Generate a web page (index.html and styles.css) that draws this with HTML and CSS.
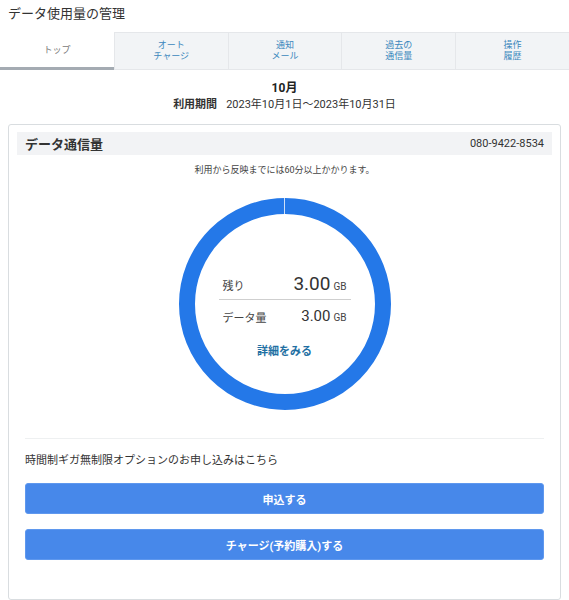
FILE: index.html
```html
<!DOCTYPE html>
<html lang="ja">
<head>
<meta charset="utf-8">
<title>データ使用量の管理</title>
<link rel="stylesheet" href="styles.css">
</head>
<body>
<header class="page-title">データ使用量の管理</header>
<nav class="tabs">
  <div class="tab active">トップ</div>
  <div class="tab">オート<br>チャージ</div>
  <div class="tab">通知<br>メール</div>
  <div class="tab">過去の<br>通信量</div>
  <div class="tab">操作<br>履歴</div>
</nav>
<section class="period">
  <div class="month">10月</div>
  <div class="range"><span class="range-label">利用期間</span>2023年10月1日～2023年10月31日</div>
</section>
<section class="card">
  <div class="card-head">
    <span class="card-title">データ通信量</span>
    <span class="phone">080-9422-8534</span>
  </div>
  <p class="note">利用から反映までには60分以上かかります。</p>
  <div class="donut">
    <div class="donut-inner">
      <div class="row row-main">
        <span class="label">残り</span>
        <span class="value"><span class="num big">3.00</span><span class="unit">GB</span></span>
      </div>
      <div class="divider"></div>
      <div class="row">
        <span class="label">データ量</span>
        <span class="value"><span class="num">3.00</span><span class="unit">GB</span></span>
      </div>
      <a class="detail">詳細をみる</a>
    </div>
  </div>
  <div class="option">
    <p class="option-text">時間制ギガ無制限オプションのお申し込みはこちら</p>
    <button class="btn">申込する</button>
    <button class="btn">チャージ(予約購入)する</button>
  </div>
</section>
</body>
</html>
```
FILE: styles.css
```css
* { box-sizing: border-box; }
html, body { margin: 0; padding: 0; background: #fff; }
body {
  width: 569px;
  font-family: Roboto, "Noto Sans CJK JP", sans-serif;
  color: #333;
}
.page-title {
  height: 32px;
  padding: 5px 0 0 8px;
  font-size: 13px;
  line-height: 18px;
  color: #333;
}
.tabs {
  display: grid;
  grid-template-columns: repeat(5, 1fr);
  height: 38px;
}
.tab {
  display: flex;
  align-items: center;
  justify-content: center;
  text-align: center;
  font-size: 9px;
  line-height: 11px;
  color: #3b88bd;
  background: #f2f4f6;
  border-top: 1px solid #e5e7ea;
  border-bottom: 1px solid #e5e7ea;
  border-left: 1px solid #e5e7ea;
}
.tab.active {
  background: #fff;
  color: #7a7a7a;
  border: none;
  border-bottom: 3px solid #a4abb2;
  padding-top: 2px;
}
.period {
  padding-top: 9px;
  text-align: center;
}
.month {
  font-size: 12px;
  font-weight: 700;
  line-height: 18px;
  color: #222;
}
.range {
  font-size: 11px;
  line-height: 16px;
  color: #333;
}
.range-label {
  font-weight: 700;
  margin-right: 9px;
}
.card {
  margin: 11px 8px 0;
  height: 476px;
  border: 1px solid #d9dde0;
  border-radius: 3px;
  padding: 7px 8px 0;
}
.card-head {
  display: flex;
  justify-content: space-between;
  align-items: center;
  height: 23px;
  padding: 0 8px;
  background: #f2f3f5;
}
.card-title {
  font-size: 13px;
  font-weight: 700;
  color: #333;
}
.phone {
  font-size: 11px;
  color: #333;
}
.note {
  margin: 9px 0 0;
  font-size: 9px;
  line-height: 12px;
  text-align: center;
  color: #444;
}
.donut {
  position: relative;
  width: 212px;
  height: 212px;
  margin: 22px auto 0;
  border: 16px solid #2478e8;
  border-radius: 50%;
}
.donut::before {
  content: "";
  position: absolute;
  top: -16px;
  left: 89px;
  width: 1px;
  height: 16px;
  background: #cfe0f8;
}
.donut-inner {
  display: flex;
  flex-direction: column;
  align-items: center;
  padding-top: 57px;
}
.row {
  display: flex;
  justify-content: space-between;
  align-items: baseline;
  width: 132px;
  height: 24px;
  padding: 0 4px;
}
.label {
  font-size: 11px;
  color: #444;
}
.value {
  display: flex;
  align-items: baseline;
}
.num {
  font-size: 15px;
  color: #333;
}
.num.big {
  font-size: 19px;
}
.unit {
  margin-left: 3px;
  font-size: 10px;
  color: #444;
}
.row-main { align-items: center; }
.row-main .label { padding-top: 4px; }
.divider {
  width: 132px;
  height: 1px;
  margin: 4px 0 4px;
  background: #cfcfcf;
}
.row + .row, .divider + .row { align-items: center; }
.divider + .row .label { padding-top: 1px; }
.detail {
  margin-top: 16px;
  font-size: 11px;
  line-height: 16px;
  font-weight: 700;
  color: #1f70a3;
}
.option {
  margin: 28px 8px 0;
  padding-top: 14px;
  border-top: 1px solid #eef0f1;
  display: flex;
  flex-direction: column;
}
.option-text {
  margin: 0;
  font-size: 11px;
  line-height: 16px;
  color: #333;
}
.btn {
  margin-top: 14px;
  height: 31px;
  width: 100%;
  border: 1px solid #5f98ee;
  border-radius: 3px;
  background: #4788ea;
  color: #fff;
  font-family: Roboto, "Noto Sans CJK JP", sans-serif;
  font-size: 11px;
  font-weight: 700;
}
.btn + .btn { margin-top: 15px; }
```
